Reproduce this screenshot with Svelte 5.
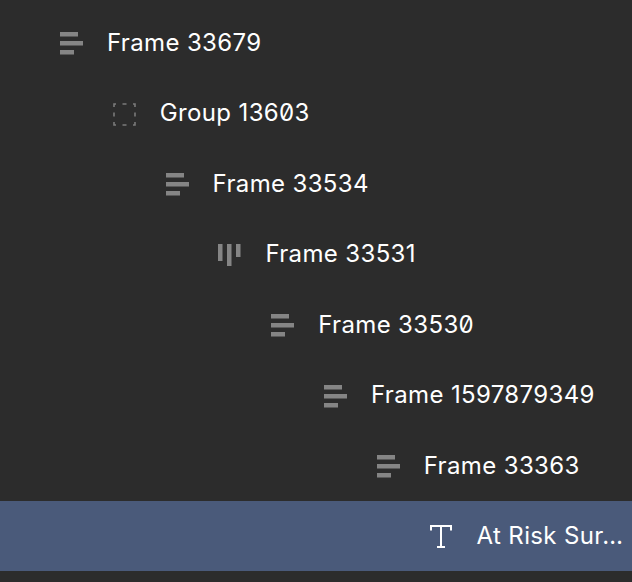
<script>
  const rows = [
    { name: 'Frame 33679', icon: 'rows' },
    { name: 'Group 13603', icon: 'group' },
    { name: 'Frame 33534', icon: 'rows' },
    { name: 'Frame 33531', icon: 'cols' },
    { name: 'Frame 33530', icon: 'rows' },
    { name: 'Frame 1597879349', icon: 'rows' },
    { name: 'Frame 33363', icon: 'rows' },
    { name: 'At Risk Sur…', icon: 'text', selected: true }
  ];
</script>

<div class="tree">
  {#each rows as row, i}
    <div class="row" class:selected={row.selected} style="padding-left: {60 + i * 52.8}px">
      <svg class="icon" width="24" height="24" viewBox="0 0 24 24">
        {#if row.icon === 'rows'}
          <rect x="0" y="2" width="18" height="4.5" />
          <rect x="0" y="11" width="23" height="4.5" />
          <rect x="0" y="20" width="14" height="4.5" />
        {:else if row.icon === 'cols'}
          <rect x="0" y="2" width="4.5" height="17" />
          <rect x="9" y="2" width="4.5" height="22" />
          <rect x="18" y="2" width="4.5" height="13" />
        {:else if row.icon === 'group'}
          <path class="dash" d="M1 6V3H3M9.5 3H13.5M20 3H22V6M22 11.5V15.5M22 21V24H20M13.5 24H9.5M3 24H1V21M1 15.5V11.5" />
        {:else}
          <path class="glyph" d="M1 6.5V2H21V6.5M11 2V23M7 23H15" />
        {/if}
      </svg>
      <span class="name">{row.name}</span>
    </div>
  {/each}
</div>

<style>
  :global(body) {
    margin: 0;
    background: #2c2c2c;
  }

  .tree {
    width: 632px;
    height: 582px;
    padding-top: 7px;
    box-sizing: border-box;
    overflow: hidden;
    background: #2c2c2c;
  }

  .row {
    height: 70.5px;
    display: flex;
    align-items: center;
    gap: 23px;
    box-sizing: border-box;
    white-space: nowrap;
  }

  .selected {
    background: #4a5a7a;
  }

  .icon {
    flex: none;
    fill: #858585;
    overflow: visible;
  }

  .dash {
    fill: none;
    stroke: #7a7a7a;
    stroke-width: 1.6;
  }

  .glyph {
    fill: none;
    stroke: #ffffff;
    stroke-width: 2;
  }

  .name {
    font-family: Inter, "Noto Sans", sans-serif;
    font-size: 24px;
    letter-spacing: 0.36px;
    font-feature-settings: "zero";
    color: #ffffff;
  }
</style>
